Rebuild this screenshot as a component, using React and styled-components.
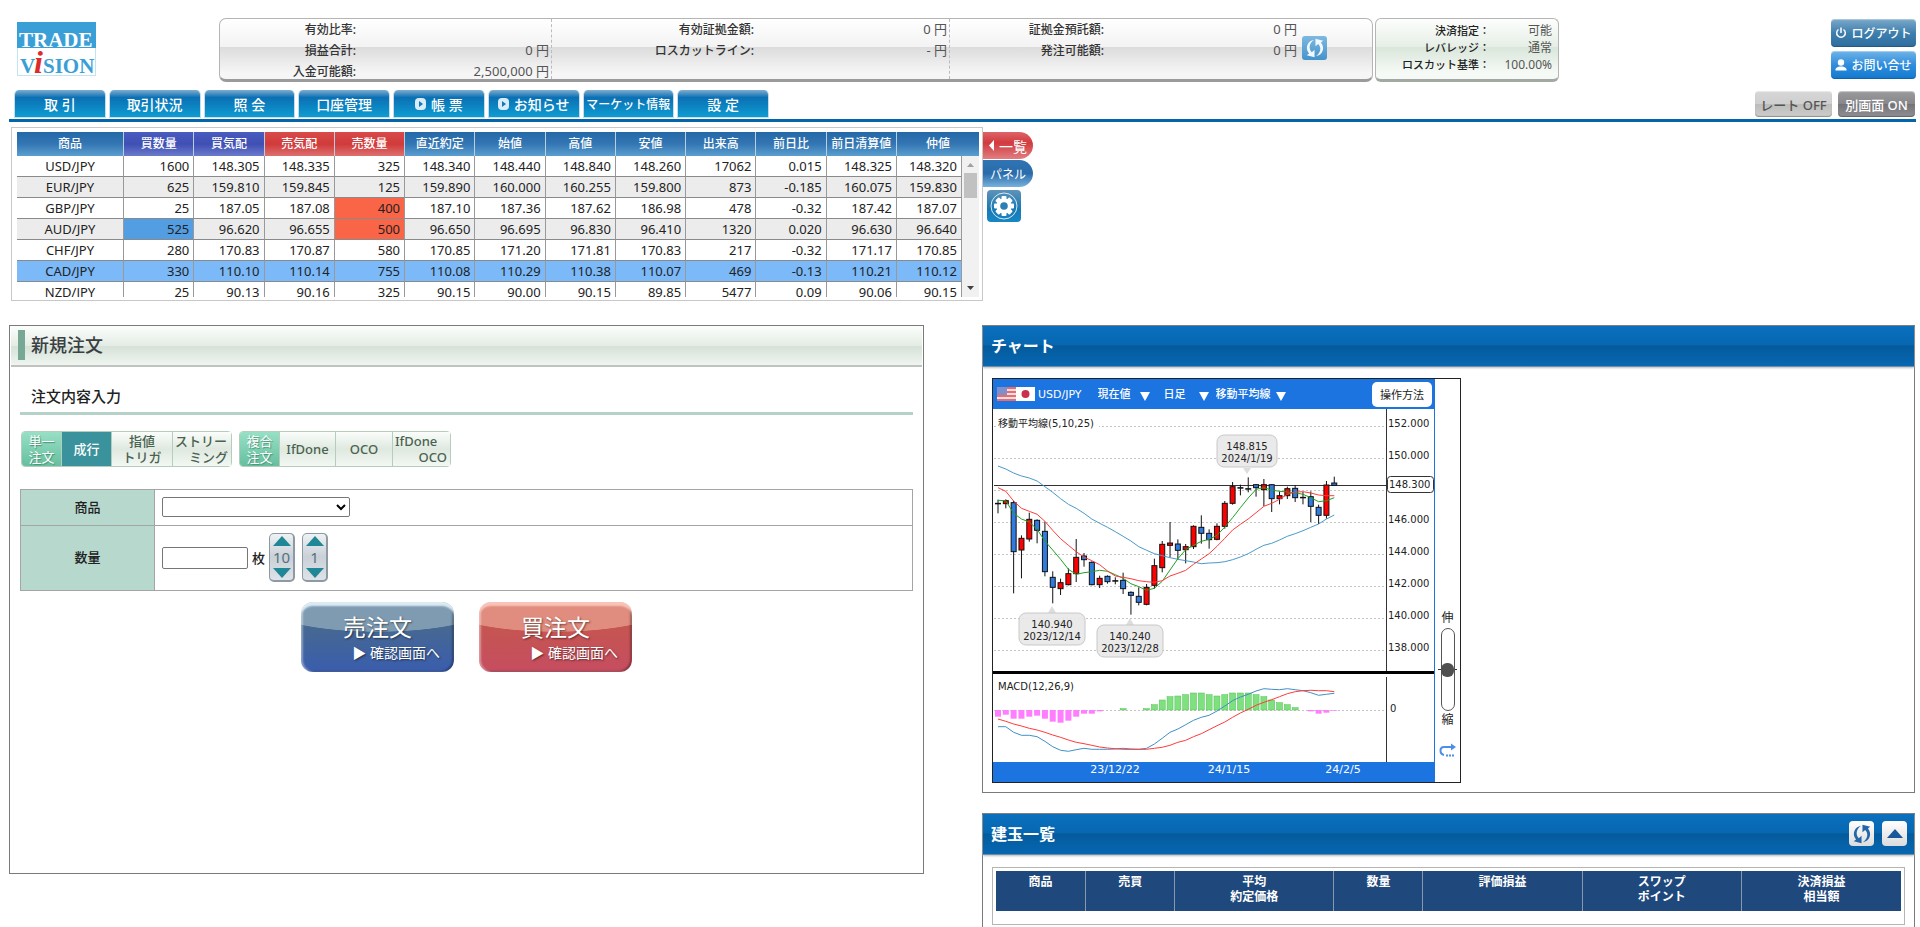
import React, { useState } from 'react';
import styled, { createGlobalStyle, css } from 'styled-components';

const NAV_ITEMS = [
  { label: '取 引' },
  { label: '取引状況' },
  { label: '照 会' },
  { label: '口座管理' },
  { label: '帳 票', external: true },
  { label: 'お知らせ', external: true },
  { label: 'マーケット情報', small: true },
  { label: '設 定' },
];

const RATE_COLUMNS = [
  { label: '商品', width: 107 },
  { label: '買数量', tone: 'buy' },
  { label: '買気配', tone: 'buy' },
  { label: '売気配', tone: 'sell' },
  { label: '売数量', tone: 'sell' },
  { label: '直近約定' },
  { label: '始値' },
  { label: '高値' },
  { label: '安値' },
  { label: '出来高' },
  { label: '前日比' },
  { label: '前日清算値' },
  { label: '仲値', width: 65 },
];

const RATES = [
  ['USD/JPY', '1600', '148.305', '148.335', '325', '148.340', '148.440', '148.840', '148.260', '17062', '0.015', '148.325', '148.320'],
  ['EUR/JPY', '625', '159.810', '159.845', '125', '159.890', '160.000', '160.255', '159.800', '873', '-0.185', '160.075', '159.830'],
  ['GBP/JPY', '25', '187.05', '187.08', '400', '187.10', '187.36', '187.62', '186.98', '478', '-0.32', '187.42', '187.07'],
  ['AUD/JPY', '525', '96.620', '96.655', '500', '96.650', '96.695', '96.830', '96.410', '1320', '0.020', '96.630', '96.640'],
  ['CHF/JPY', '280', '170.83', '170.87', '580', '170.85', '171.20', '171.81', '170.83', '217', '-0.32', '171.17', '170.85'],
  ['CAD/JPY', '330', '110.10', '110.14', '755', '110.08', '110.29', '110.38', '110.07', '469', '-0.13', '110.21', '110.12'],
  ['NZD/JPY', '25', '90.13', '90.16', '325', '90.15', '90.00', '90.15', '89.85', '5477', '0.09', '90.06', '90.15'],
];

const SELECTED_PAIR = 'CAD/JPY';
const RATE_MARKS = {
  'GBP/JPY-4': '#fa6548',
  'AUD/JPY-1': '#539de2',
  'AUD/JPY-4': '#fa6548',
};

const POSITION_COLUMNS = [
  { label: ['商品'], width: 90 },
  { label: ['売買'], width: 89 },
  { label: ['平均', '約定価格'], width: 159 },
  { label: ['数量'], width: 89 },
  { label: ['評価損益'], width: 159 },
  { label: ['スワップ', 'ポイント'], width: 159 },
  { label: ['決済損益', '相当額'], width: 159 },
];

// 149.25円を0とした下向きの目盛り (1円 = 48)
// [上端, 下端, 高値, 安値, 陽線]
const CANDLES = [
  [100, 100, 89, 130, 0], [92, 101, 88, 115, 1], [98, 245, 93, 370, 0], [205, 240, 196, 325, 1],
  [148, 207, 128, 215, 1], [151, 181, 148, 220, 0], [184, 305, 155, 319, 0], [322, 352, 304, 400, 0],
  [338, 356, 326, 375, 1], [311, 344, 295, 346, 1], [262, 311, 207, 336, 1], [258, 269, 249, 290, 0],
  [277, 344, 274, 346, 0], [325, 344, 317, 354, 1], [319, 335, 316, 341, 0], [332, 332, 322, 343, 0],
  [331, 356, 308, 372, 0], [367, 376, 364, 434, 0], [379, 397, 352, 406, 0], [352, 403, 342, 406, 1],
  [287, 346, 266, 356, 1], [223, 293, 213, 307, 1], [219, 226, 156, 262, 1], [222, 241, 208, 268, 0],
  [230, 239, 222, 280, 1], [169, 230, 166, 237, 1], [172, 190, 136, 221, 0], [190, 209, 178, 236, 0],
  [169, 208, 160, 211, 1], [100, 169, 93, 176, 1], [50, 100, 36, 104, 1], [53, 53, 44, 76, 0],
  [56, 56, 22, 67, 0], [44, 53, 42, 80, 0], [44, 59, 27, 108, 1], [44, 86, 42, 126, 0],
  [77, 86, 64, 103, 1], [56, 77, 50, 87, 1], [55, 83, 45, 96, 0], [82, 82, 66, 103, 0],
  [80, 109, 64, 156, 0], [112, 136, 104, 162, 0], [45, 136, 33, 146, 1], [39, 46, 20, 46, 0],
];
const MA5 = [91, 92, 130, 147, 156, 178, 213, 240, 268, 298, 313, 308, 305, 301, 304, 314, 325, 341, 350, 361, 355, 334, 300, 266, 239, 226, 214, 208, 196, 171, 143, 113, 84, 58, 53, 60, 64, 66, 68, 73, 83, 95, 92, 83];
const MA10 = [53, 64, 93, 115, 124, 133, 154, 181, 206, 226, 245, 261, 272, 284, 303, 318, 322, 326, 332, 335, 337, 332, 318, 310, 301, 283, 267, 251, 229, 205, 180, 163, 147, 128, 109, 100, 88, 73, 66, 65, 69, 75, 77, 77];
const MA25 = [-12, -3, 9, 18, 24, 33, 50, 67, 86, 103, 115, 130, 147, 160, 172, 185, 199, 213, 230, 241, 251, 257, 263, 268, 272, 276, 281, 279, 278, 275, 269, 261, 251, 238, 226, 220, 210, 199, 191, 182, 172, 162, 147, 135];
// MACD: 0ラインからの距離 (上がプラス)
const MACD_BARS = [-20, -14, -26, -26, -20, -17, -26, -35, -38, -32, -20, -11, -11, -4, 0, 0, 4, 0, 0, 4, 16, 30, 40, 42, 46, 51, 51, 46, 42, 46, 51, 51, 51, 46, 40, 30, 22, 16, 7, 0, -4, -11, -8, -2];
const MACD_LINE = [-50, -50, -67, -76, -76, -80, -94, -110, -121, -124, -119, -115, -118, -118, -118, -117, -115, -117, -118, -115, -102, -85, -67, -57, -44, -31, -22, -16, -3, 12, 28, 39, 47, 57, 64, 62, 61, 64, 61, 58, 52, 44, 47, 50];
const SIGNAL_LINE = [-27, -34, -42, -48, -55, -60, -67, -75, -82, -90, -97, -101, -106, -111, -114, -116, -118, -118, -118, -118, -115, -112, -106, -97, -91, -80, -71, -59, -47, -36, -22, -9, 2, 14, 23, 31, 40, 49, 55, 58, 59, 58, 58, 55];

const candleX = i => 5 + i * 7.82;
const priceY = v => 61 + v / 3;
const macdY = v => 301 - v / 3;
const toPoints = (values, toY) =>
  values.map((v, i) => `${candleX(i).toFixed(1)},${toY(v).toFixed(1)}`).join(' ');

const CALLOUTS = [
  { x: 224, y: 26, width: 60, price: '148.815', date: '2024/1/19', tip: '250,59 258,59 254,65' },
  { x: 26, y: 204, width: 66, price: '140.940', date: '2023/12/14', tip: '55,204 63,204 59,197' },
  { x: 104, y: 216, width: 66, price: '140.240', date: '2023/12/28', tip: '133,216 141,216 137,209' },
];

const REFRESH_ARROW = 'M11 3C4 4 0.5 12 5.5 18L3 20L11.5 22L11.5 14L8.5 16.5C4.5 12.5 6 6.5 11 3Z';

const RefreshIcon = ({ size, color }) => (
  <svg width={size} height={size} viewBox="0 0 24 24" fill={color} aria-hidden="true">
    <path d={REFRESH_ARROW} />
    <path d={REFRESH_ARROW} transform="rotate(180 12 12)" />
  </svg>
);

const GearIcon = () => (
  <svg width="30" height="30" viewBox="0 0 30 30" aria-hidden="true">
    <circle cx="15" cy="15" r="13" fill="none" stroke="#d5e9f5" strokeWidth="1" />
    {[0, 45, 90, 135].map(deg => (
      <rect key={deg} x="12.5" y="5" width="5" height="20" rx="1" fill="#fff" transform={`rotate(${deg} 15 15)`} />
    ))}
    <circle cx="15" cy="15" r="7.5" fill="#fff" />
    <circle cx="15" cy="15" r="3.8" fill="#2b7fb5" />
  </svg>
);

const PlayIcon = () => (
  <svg width="11" height="12" viewBox="0 0 11 12" aria-hidden="true">
    <rect width="11" height="12" rx="4" fill="#d9edf8" />
    <path d="M4 3L8 6L4 9Z" fill="#1278b8" />
  </svg>
);

const Triangle = ({ width, height, down, color }) => (
  <svg width={width} height={height} viewBox="0 0 10 10" preserveAspectRatio="none" aria-hidden="true">
    <path d={down ? 'M0 0H10L5 10Z' : 'M5 0L10 10H0Z'} fill={color} />
  </svg>
);

const Logo = () => (
  <svg width="79" height="54" viewBox="0 0 79 54" role="img" aria-label="TRADE VISION">
    <rect x="0.5" y="0.5" width="78" height="53" fill="#fff" stroke="#c3e2f3" />
    <rect width="79" height="26" fill="#3a9fd6" />
    <g fontFamily="'Liberation Serif', serif" fontWeight="bold" fontSize="21">
      <text x="2" y="25" fill="#fff">TRADE</text>
      <text x="3" y="51" fill="#3a9fd6">V</text>
      <text x="26" y="51" fill="#3a9fd6">SION</text>
      <text x="17" y="51" fill="#dd2a2a" fontStyle="italic" fontSize="32">i</text>
    </g>
  </svg>
);

const Flags = () => (
  <svg width="38" height="14" viewBox="0 0 38 14" aria-hidden="true">
    <rect width="19" height="14" fill="#f6dfe0" />
    {[0, 4, 8, 12].map(y => (
      <rect key={y} y={y} width="19" height="2" fill="#e96c70" />
    ))}
    <rect width="10" height="8" fill="#7f8fca" />
    <rect x="19" width="19" height="14" fill="#fff" />
    <circle cx="28.5" cy="7" r="4" fill="#c8304e" />
  </svg>
);

const PriceChart = () => (
  <ChartSvg viewBox="0 0 441 353" width="441" height="353">
    <g stroke="#c4c4c4" strokeDasharray="2 2">
      {[0, 1, 2, 3, 4, 5, 6, 7].map(i => (
        <line key={i} x1="1" x2="393" y1={17.5 + i * 32} y2={17.5 + i * 32} />
      ))}
      <line x1="1" x2="393" y1="301.5" y2="301.5" />
    </g>
    <rect x="4" y="8" width="102" height="14" fill="#fff" />
    <g fill="#222">
      <text x="5" y="18">移動平均線(5,10,25)</text>
      {[152, 150, 146, 144, 142, 140, 138].map(p => (
        <text key={p} x="395" y={(152 - p) * 16 + 18}>{`${p}.000`}</text>
      ))}
      <text x="5" y="281">MACD(12,26,9)</text>
      <text x="397" y="303">0</text>
    </g>
    <line x1="1" x2="393" y1="76.5" y2="76.5" stroke="#333" />
    <g stroke="#333">
      <line x1="393.5" x2="393.5" y1="0" y2="262" />
      <line x1="393.5" x2="393.5" y1="268" y2="353" />
    </g>
    {CANDLES.map(([top, bottom, high, low, up], i) => (
      <g key={i} stroke="#111">
        <line x1={candleX(i)} x2={candleX(i)} y1={priceY(high)} y2={priceY(low)} />
        <rect
          x={candleX(i) - 2.5}
          y={priceY(top)}
          width="5"
          height={Math.max((bottom - top) / 3, 0.5)}
          fill={up ? '#f00' : '#2f7be0'}
        />
      </g>
    ))}
    <g fill="none">
      <polyline points={toPoints(MA25, priceY)} stroke="#4a9ac8" />
      <polyline points={toPoints(MA5, priceY)} stroke="#22a022" />
      <polyline points={toPoints(MA10, priceY)} stroke="#ff3b3b" />
    </g>
    {CALLOUTS.map(c => (
      <g key={c.date}>
        <polygon points={c.tip} fill="#ddd" />
        <rect x={c.x} y={c.y} width={c.width} height="32" rx="7" fill="#e8e8e8" fillOpacity="0.9" stroke="#c8c8c8" />
        <g fill="#222" textAnchor="middle">
          <text x={c.x + c.width / 2} y={c.y + 15}>{c.price}</text>
          <text x={c.x + c.width / 2} y={c.y + 27}>{c.date}</text>
        </g>
      </g>
    ))}
    <rect x="394.5" y="67.5" width="46" height="16" rx="3" fill="#fff" stroke="#333" />
    <text x="396" y="79" fill="#222">148.300</text>
    <rect y="262" width="441" height="3" fill="#000" />
    {MACD_BARS.map((v, i) => (
      <rect
        key={i}
        x={candleX(i) - 3}
        y={v > 0 ? macdY(v) : 301}
        width="6"
        height={Math.abs(v) / 3}
        fill={v > 0 ? '#7fe07f' : '#ff7dff'}
        stroke={v > 0 ? '#52c052' : 'none'}
        strokeWidth={v ? 0.5 : 0}
      />
    ))}
    <g fill="none">
      <polyline points={toPoints(MACD_LINE, macdY)} stroke="#4090c4" />
      <polyline points={toPoints(SIGNAL_LINE, macdY)} stroke="#ff3b3b" />
    </g>
  </ChartSvg>
);

const RateTable = () => (
  <RateBox>
    <RateViewport>
      <Rates>
        <colgroup>
          {RATE_COLUMNS.map(c => (
            <col key={c.label} width={c.width} />
          ))}
          <col width="17" />
        </colgroup>
        <thead>
          <tr>
            {RATE_COLUMNS.map((c, i) => (
              <RateHead key={c.label} $tone={c.tone} colSpan={i === 12 ? 2 : 1}>
                {c.label}
              </RateHead>
            ))}
          </tr>
        </thead>
        <tbody>
          {RATES.map((row, r) => (
            <RateRow key={row[0]} $selected={row[0] === SELECTED_PAIR}>
              {row.map((value, i) => (
                <RateCell key={i} $mark={RATE_MARKS[`${row[0]}-${i}`]}>
                  {value}
                </RateCell>
              ))}
              {r === 0 && (
                <ScrollCell rowSpan={RATES.length}>
                  <ScrollBar>
                    <Triangle width={7} height={4} color="#a0a0a0" />
                    <ScrollThumb />
                    <Triangle width={7} height={4} color="#404040" down />
                  </ScrollBar>
                </ScrollCell>
              )}
            </RateRow>
          ))}
        </tbody>
      </Rates>
    </RateViewport>
  </RateBox>
);

const Stepper = ({ step, onStep }) => (
  <StepBox>
    <StepButton type="button" aria-label={`${step}枚増やす`} onClick={() => onStep(step)}>
      <Triangle width={18} height={10} color="#1f8795" />
    </StepButton>
    <span>{step}</span>
    <StepButton type="button" aria-label={`${step}枚減らす`} onClick={() => onStep(-step)}>
      <Triangle width={18} height={10} color="#1f8795" down />
    </StepButton>
  </StepBox>
);

const OrderForm = () => {
  const [quantity, setQuantity] = useState('');

  const handleStep = diff => {
    setQuantity(prev => String(Math.max(0, Number(prev) + diff)));
  };

  return (
    <OrderBody>
      <SubTitle>注文内容入力</SubTitle>
      <OrderTypes>
        <OrderGroup>
          <GroupLabel>
            単一
            <br />
            注文
          </GroupLabel>
          <OrderType $width={50} $active>成行</OrderType>
          <OrderType $width={61}>
            指値
            <br />
            トリガ
          </OrderType>
          <OrderType $width={59}>
            <Stagger>
              <span>ストリー</span>
              <span>ミング</span>
            </Stagger>
          </OrderType>
        </OrderGroup>
        <OrderGroup>
          <GroupLabel>
            複合
            <br />
            注文
          </GroupLabel>
          <OrderType $width={56}>IfDone</OrderType>
          <OrderType $width={57}>OCO</OrderType>
          <OrderType $width={58}>
            <Stagger>
              <span>IfDone</span>
              <span>OCO</span>
            </Stagger>
          </OrderType>
        </OrderGroup>
      </OrderTypes>
      <FormGrid>
        <FieldLabel htmlFor="product">商品</FieldLabel>
        <Field>
          <ProductSelect id="product" />
        </Field>
        <FieldLabel htmlFor="quantity">数量</FieldLabel>
        <Field $tall>
          <QuantityInput
            id="quantity"
            value={quantity}
            onChange={e => setQuantity(e.target.value)}
          />
          <Unit>枚</Unit>
          <Stepper step={10} onStep={handleStep} />
          <Stepper step={1} onStep={handleStep} />
        </Field>
      </FormGrid>
      <OrderActions>
        <OrderButton type="button" $side="sell">
          売注文
          <small>▶ 確認画面へ</small>
        </OrderButton>
        <OrderButton type="button" $side="buy">
          買注文
          <small>▶ 確認画面へ</small>
        </OrderButton>
      </OrderActions>
    </OrderBody>
  );
};

const ChartWidget = () => (
  <ChartBox>
    <ChartMain>
      <ChartBar>
        <Flags />
        <PairName>USD/JPY</PairName>
        <ChartPick $width={52} $gap={14}>
          <select aria-label="価格"><option>現在値</option></select>
        </ChartPick>
        <ChartPick $width={45} $gap={7}>
          <select aria-label="足種"><option>日足</option></select>
        </ChartPick>
        <ChartPick $width={70}>
          <select aria-label="指標"><option>移動平均線</option></select>
        </ChartPick>
        <HelpButton type="button">操作方法</HelpButton>
      </ChartBar>
      <PriceChart />
      <DateBar>
        <span>23/12/22</span>
        <span>24/1/15</span>
        <span>24/2/5</span>
      </DateBar>
    </ChartMain>
    <ZoomColumn>
      <label htmlFor="zoom">伸</label>
      <ZoomTrack>
        <ZoomRange id="zoom" type="range" defaultValue="50" />
      </ZoomTrack>
      <span>縮</span>
      <ResetButton type="button" aria-label="元に戻す">
        <svg width="18" height="14" viewBox="0 0 18 14" fill="none" stroke="#4a8fe8" strokeWidth="2">
          <path d="M13 4H5C2.5 4 1.5 5.5 1.5 7.5S2.5 11.5 5 12" />
          <path d="M7 12.5H16" strokeDasharray="2 1" />
          <path d="M12 0.5L17 4L12 7.5Z" fill="#4a8fe8" stroke="none" />
        </svg>
      </ResetButton>
    </ZoomColumn>
  </ChartBox>
);

const App = () => (
  <>
    <GlobalStyle />
    <Page>
      <Header>
        <Logo />
        <Summary>
          <SummaryCell $basis={331}>
            <dt>有効比率:</dt>
            <dd />
            <dt>損益合計:</dt>
            <dd>0 円</dd>
            <dt>入金可能額:</dt>
            <dd>2,500,000 円</dd>
          </SummaryCell>
          <SummaryCell $basis={398}>
            <dt>有効証拠金額:</dt>
            <dd>0 円</dd>
            <dt>ロスカットライン:</dt>
            <dd>- 円</dd>
          </SummaryCell>
          <SummaryCell $basis={350}>
            <dt>証拠金預託額:</dt>
            <dd>0 円</dd>
            <dt>発注可能額:</dt>
            <dd>0 円</dd>
          </SummaryCell>
          <SummaryTool>
            <RefreshButton type="button" aria-label="更新">
              <RefreshIcon size={22} color="#f2f8fd" />
            </RefreshButton>
          </SummaryTool>
        </Summary>
        <Status>
          <dt>決済指定：</dt>
          <dd>可能</dd>
          <dt>レバレッジ：</dt>
          <dd>通常</dd>
          <dt>ロスカット基準：</dt>
          <dd>100.00%</dd>
        </Status>
        <HeaderActions>
          <HeaderButton type="button">
            <svg width="12" height="12" viewBox="0 0 12 12" fill="none" stroke="#fff" strokeWidth="1.5" aria-hidden="true">
              <path d="M6 0.5V6M3.5 2.5A4.3 4.3 0 1 0 8.5 2.5" />
            </svg>
            ログアウト
          </HeaderButton>
          <HeaderButton type="button" $bright>
            <svg width="12" height="12" viewBox="0 0 12 12" fill="#fff" aria-hidden="true">
              <circle cx="6" cy="3.5" r="3.2" />
              <path d="M0.5 11.5V10C1.5 8 4 7.5 6 7.5S10.5 8 11.5 10V11.5Z" />
            </svg>
            お問い合せ
          </HeaderButton>
        </HeaderActions>
      </Header>

      <Nav>
        <Tabs>
          {NAV_ITEMS.map(item => (
            <Tab key={item.label} href="#" $small={item.small}>
              {item.external && <PlayIcon />}
              {item.label}
            </Tab>
          ))}
        </Tabs>
        <Toggles>
          <Toggle type="button">レート OFF</Toggle>
          <Toggle type="button" $on>別画面 ON</Toggle>
        </Toggles>
      </Nav>

      <RateArea>
        <RateTable />
        <SideTabs>
          <SideTab type="button" $active>
            <svg width="5" height="11" viewBox="0 0 5 11" aria-hidden="true">
              <path d="M5 0V11L0 5.5Z" fill="#fff" />
            </svg>
            一覧
          </SideTab>
          <SideTab type="button">パネル</SideTab>
          <GearButton type="button" aria-label="表示設定">
            <GearIcon />
          </GearButton>
        </SideTabs>
      </RateArea>

      <Columns>
        <Panel $minHeight={549}>
          <OrderTitleBar>
            <h2>新規注文</h2>
          </OrderTitleBar>
          <OrderForm />
        </Panel>
        <RightStack>
          <Panel>
            <TitleBar>
              <h2>チャート</h2>
            </TitleBar>
            <ChartBody>
              <ChartWidget />
            </ChartBody>
          </Panel>
          <Panel $flush>
            <TitleBar>
              <h2>建玉一覧</h2>
              <BarButton type="button" aria-label="更新">
                <RefreshIcon size={22} color="#2467a8" />
              </BarButton>
              <BarButton type="button" aria-label="閉じる">
                <Triangle width={16} height={9} color="#17599c" />
              </BarButton>
            </TitleBar>
            <PositionBody>
              <PositionBox>
                <Positions>
                  <thead>
                    <tr>
                      {POSITION_COLUMNS.map(c => (
                        <th key={c.label[0]} width={c.width}>
                          {c.label.map(line => (
                            <div key={line}>{line}</div>
                          ))}
                        </th>
                      ))}
                    </tr>
                  </thead>
                </Positions>
              </PositionBox>
            </PositionBody>
          </Panel>
        </RightStack>
      </Columns>
    </Page>
  </>
);

export default App;

const GlobalStyle = createGlobalStyle`
  * {
    box-sizing: border-box;
  }

  body {
    margin: 0;
    background: #fff;
    color: #222;
    font-family: 'Noto Sans', 'Noto Sans CJK JP', sans-serif;
    font-size: 13px;
  }

  button, select, input {
    font-family: inherit;
    margin: 0;
  }

  button {
    padding: 0;
    border: 0;
    cursor: pointer;
  }

  h2, h3, dl, dd {
    margin: 0;
  }
`;

const Page = styled.div`
  padding: 0 4px 0 9px;
`;

const Header = styled.header`
  display: flex;
  align-items: flex-start;
  padding: 18px 0 8px 8px;

  > svg {
    flex: none;
    margin: 4px 123px 0 0;
  }
`;

const Summary = styled.div`
  display: flex;
  flex: 0 1 1154px;
  height: 64px;
  border: 1px solid #b5b5b5;
  border-bottom: 3px solid #9b9b9b;
  border-radius: 7px;
  background: linear-gradient(#fff, #f3f3f3 46%, #dcdcdc 47%, #f6f6f6 90%);
`;

const SummaryCell = styled.dl`
  display: grid;
  flex: 1 1 ${({ $basis }) => $basis}px;
  grid-template-columns: 1fr 195px;
  grid-auto-rows: 21px;
  text-align: right;
  line-height: 21px;

  & + & {
    border-left: 1px dashed #bbb;
  }

  dt {
    color: #333;
    font-size: 12px;
    font-weight: 500;
  }

  dd {
    padding-right: 2px;
    color: #555;
  }
`;

const SummaryTool = styled.div`
  flex: 0 0 73px;
  padding: 17px 0 0 3px;
`;

const RefreshButton = styled.button`
  display: grid;
  place-items: center;
  width: 25px;
  height: 24px;
  border-radius: 3px;
  background: linear-gradient(#7db9e0, #4493cb);
`;

const Status = styled.dl`
  display: grid;
  flex: 0 0 184px;
  grid-template-columns: 1fr 62px;
  grid-auto-rows: 17px;
  height: 64px;
  margin-left: 2px;
  padding: 3px 6px 0 0;
  border: 1px solid #b5b5b5;
  border-bottom: 3px solid #a3a8a3;
  border-radius: 6px;
  background: linear-gradient(#fdfefd, #e6eee6 46%, #d9e6da 47%, #f6faf6 90%);
  line-height: 17px;
  text-align: right;

  dt {
    font-size: 11px;
    font-weight: 500;
  }

  dd {
    color: #555;
    font-size: 12px;
  }
`;

const HeaderActions = styled.div`
  display: grid;
  gap: 4px;
  margin: 1px 0 0 auto;
`;

const HeaderButton = styled.button`
  display: flex;
  align-items: center;
  justify-content: center;
  gap: 4px;
  width: 85px;
  height: 28px;
  border-radius: 4px;
  background: ${({ $bright }) =>
    $bright ? 'linear-gradient(#6fb3e8, #2f8ddc 50%, #1379cf)' : 'linear-gradient(#7ba9c9, #3f7fae 50%, #2d6d9f)'};
  box-shadow: inset 0 -1px 1px rgba(0, 0, 0, 0.2), inset 0 1px 1px rgba(255, 255, 255, 0.4);
  color: #fff;
  font-size: 12px;
  font-weight: 500;
  white-space: nowrap;
`;

const Nav = styled.nav`
  display: flex;
  justify-content: space-between;
  height: 32px;
  padding-left: 5px;
  border-bottom: 3px solid #0466a8;
`;

const Tabs = styled.div`
  display: flex;
  flex: 0 1 755px;
  gap: 3px;
`;

const Tab = styled.a`
  display: flex;
  flex: 1 1 0;
  align-items: center;
  justify-content: center;
  gap: 5px;
  height: 28px;
  border: 1px solid #c6dcea;
  border-width: 0 1px 1px;
  border-radius: 5px 5px 0 0;
  background: linear-gradient(#7fadd0, #0a70b4 28%, #0f9cd2);
  color: #fff;
  font-size: ${({ $small }) => ($small ? 12 : 14)}px;
  font-weight: 500;
  text-decoration: none;
  white-space: nowrap;
`;

const Toggles = styled.div`
  display: flex;
  gap: 6px;
  padding: 1px 1px 0 0;
`;

const Toggle = styled.button`
  width: 77px;
  height: 26px;
  border-radius: 4px;
  background: ${({ $on }) =>
    $on ? 'linear-gradient(#9b9b9e, #87878b 50%, #737377 51%, #909094)' : 'linear-gradient(#d6d6d6, #cfcfcf 50%, #bcbcba 51%, #cdcdcb)'};
  box-shadow: inset 0 -1px 1px rgba(0, 0, 0, 0.3), inset 0 1px 1px rgba(255, 255, 255, 0.5);
  color: ${({ $on }) => ($on ? '#fff' : '#555')};
  font-size: 13px;
  font-weight: 500;
  white-space: nowrap;
`;

const RateArea = styled.div`
  display: flex;
  padding: 5px 0 0 2px;
`;

const RateBox = styled.div`
  flex: 0 1 972px;
  height: 174px;
  padding: 4px 3px 3px 5px;
  border: 1px solid #c8c8c8;
`;

const RateViewport = styled.div`
  height: 165px;
  overflow: hidden;
`;

const Rates = styled.table`
  width: 100%;
  border-spacing: 0;
  table-layout: fixed;
`;

const headTones = {
  buy: 'linear-gradient(#4a5cc0, #3f4fb4 50%, #6b7bcb)',
  sell: 'linear-gradient(#d94a4a, #d03a3a 50%, #de7070)',
};

const RateHead = styled.th`
  height: 24px;
  padding: 0;
  border-right: 1px solid #b9cfe0;
  background: ${({ $tone }) => headTones[$tone] || 'linear-gradient(#2468a8, #3476b3 50%, #5b9fd0)'};
  color: #fff;
  font-size: 12px;
  font-weight: 500;
  line-height: 24px;
  white-space: nowrap;

  &:last-child {
    border-right: 0;
  }
`;

const RateCell = styled.td`
  height: 21px;
  padding: 0 4px 0 0;
  border-right: 1px solid #999;
  border-bottom: 1px solid #8a8a8a;
  ${({ $mark }) => $mark && css`background: ${$mark};`}
  line-height: 20px;
  text-align: right;

  &:first-child {
    padding: 0;
    text-align: center;
  }
`;

const RateRow = styled.tr`
  &:nth-child(even) {
    background: #ececec;
  }

  ${({ $selected }) => $selected && css`
    && {
      background: #7bb9f8;
    }
  `}
`;

const ScrollCell = styled.td`
  padding: 0;
  background: #f1f1f1;
  vertical-align: top;
`;

const ScrollBar = styled.div`
  display: flex;
  flex-direction: column;
  align-items: center;
  height: 141px;
  padding: 7px 0;

  svg:last-child {
    margin-top: auto;
  }
`;

const ScrollThumb = styled.div`
  width: 13px;
  height: 25px;
  margin-top: 6px;
  background: #c1c1c1;
`;

const SideTabs = styled.div`
  display: flex;
  flex-direction: column;
  align-items: flex-start;
  gap: 1px;
  padding-top: 5px;
`;

const SideTab = styled.button`
  display: flex;
  align-items: center;
  justify-content: center;
  gap: 5px;
  width: 50px;
  height: 27px;
  border-radius: 0 14px 14px 0;
  background: ${({ $active }) =>
    $active ? 'linear-gradient(#dc6468, #d23a3e 40%, #e07f82)' : 'linear-gradient(#2f74b3, #2a6cab 50%, #78b2dc)'};
  color: #fff;
  font-size: ${({ $active }) => ($active ? 14 : 12)}px;
`;

const GearButton = styled.button`
  display: grid;
  place-items: center;
  width: 34px;
  height: 32px;
  margin: 2px 0 0 4px;
  border-radius: 4px;
  background: linear-gradient(#5f93b8, #1879b4 60%, #1787c4);
`;

const Columns = styled.main`
  display: grid;
  grid-template-columns: minmax(0, 915fr) minmax(0, 933fr);
  gap: 58px;
  align-items: start;
  margin-top: 24px;
  padding-right: 1px;
`;

const RightStack = styled.div`
  display: grid;
  gap: 20px;
`;

const Panel = styled.section`
  min-width: 0;
  min-height: ${({ $minHeight }) => $minHeight || 0}px;
  border: 1px solid #7a7a7a;
  ${({ $flush }) => $flush && css`border-bottom: 0;`}
`;

const OrderTitleBar = styled.header`
  display: flex;
  align-items: center;
  height: 41px;
  margin: 0 1px;
  padding: 0 0 1px 7px;
  border-bottom: 2px solid #bfc2bf;
  background: linear-gradient(#fcfefc, #e4ece5 50%, #d6e1d8 52%, #eff5f0);

  h2 {
    padding-left: 6px;
    border-left: 7px solid #77a795;
    color: #3a3f44;
    font-size: 18px;
    font-weight: 500;
    line-height: 30px;
  }
`;

const TitleBar = styled.header`
  display: flex;
  align-items: center;
  gap: 8px;
  height: 41px;
  padding: 0 7px 1px 8px;
  border-bottom: 1px solid #6a8fae;
  background: linear-gradient(#0a70be, #0767b1 46%, #045b9c 50%, #0767b2);
  box-shadow: 0 1px 2px #bbb;

  h2 {
    flex: 1;
    color: #fff;
    font-size: 16px;
    font-weight: bold;
    line-height: 20px;
  }
`;

const BarButton = styled.button`
  display: grid;
  place-items: center;
  width: 25px;
  height: 25px;
  border-radius: 4px;
  background: linear-gradient(#fff, #dcdcdc);
`;

const OrderBody = styled.div`
  padding: 13px 10px 0;
`;

const SubTitle = styled.h3`
  margin: 0;
  padding-left: 11px;
  border-bottom: 3px solid #b4d2c8;
  font-size: 15px;
  font-weight: 500;
  line-height: 32px;
`;

const OrderTypes = styled.div`
  display: flex;
  gap: 7px;
  padding: 16px 1px 22px;
`;

const OrderGroup = styled.div`
  display: flex;
  height: 36px;
  border: 1px solid #b5cdbd;
  border-radius: 4px;
`;

const GroupLabel = styled.span`
  display: grid;
  align-content: center;
  width: 39px;
  border-radius: 3px 0 0 3px;
  background: linear-gradient(#97e0c6, #66bf9e);
  color: #fff;
  font-size: 13px;
  line-height: 16px;
  text-align: center;
  text-shadow: 1px 1px 1px #4a8f76;
`;

const OrderType = styled.button.attrs({ type: 'button' })`
  width: ${({ $width }) => $width}px;
  border-left: 1px solid #b5cdbd;
  background: ${({ $active }) => ($active ? '#3a929c' : 'linear-gradient(#fafdfa, #dfe9e0 50%, #f2f7f2)')};
  color: ${({ $active }) => ($active ? '#fff' : '#4a6350')};
  font-size: 13px;
  font-weight: 500;
  line-height: 16px;
  white-space: nowrap;
`;

const Stagger = styled.span`
  display: flex;
  flex-direction: column;
  padding: 0 3px 0 2px;

  span:first-child {
    align-self: flex-start;
  }

  span:last-child {
    align-self: flex-end;
  }
`;

const FormGrid = styled.div`
  display: grid;
  grid-template-columns: 134px 1fr;
  border: 1px solid #a5a5a5;
`;

const FieldLabel = styled.label`
  display: grid;
  place-items: center;
  padding-bottom: 2px;
  border-right: 1px solid #a5a5a5;
  background: #b7d8cd;
  font-size: 13px;
  font-weight: 500;
  line-height: 16px;

  &:nth-of-type(n + 2) {
    border-top: 1px solid #a5a5a5;
  }
`;

const Field = styled.div`
  display: flex;
  align-items: center;
  height: ${({ $tall }) => ($tall ? 65 : 35)}px;
  padding: 0 0 1px 7px;
  ${({ $tall }) => $tall && css`border-top: 1px solid #a5a5a5;`}
`;

const ProductSelect = styled.select`
  width: 188px;
  height: 20px;
  border: 1px solid #767676;
  border-radius: 2px;
  background: #fff;
`;

const QuantityInput = styled.input`
  width: 86px;
  height: 22px;
  border: 1px solid #767676;
  border-radius: 2px;
`;

const Unit = styled.span`
  margin: 0 -3px 0 4px;
  font-weight: 500;
  line-height: 16px;
`;

const StepBox = styled.div`
  display: flex;
  flex-direction: column;
  align-items: center;
  justify-content: space-between;
  width: 26px;
  height: 49px;
  margin-left: 7px;
  padding: 2px 0;
  border: 1px solid #8e9aa3;
  border-right-width: 2px;
  border-bottom-width: 2px;
  border-radius: 5px;
  background: linear-gradient(#eef2f4, #c9d0d7 50%, #dde3e8);
  color: #56707a;
  font-size: 15px;
  line-height: 16px;
`;

const StepButton = styled.button`
  display: flex;
  background: none;
`;

const OrderActions = styled.div`
  display: flex;
  justify-content: center;
  gap: 25px;
  padding-top: 11px;
`;

const sideColors = {
  sell: { top: '#7e9bb2', mid: '#47698f', bottom: '#3a5dae', edge: '#dcebf3' },
  buy: { top: '#e08c7e', mid: '#c55650', bottom: '#c64d60', edge: '#f9c4b8' },
};

const OrderButton = styled.button`
  display: flex;
  flex-direction: column;
  align-items: center;
  justify-content: center;
  width: 153px;
  height: 70px;
  border-radius: 12px;
  ${({ $side }) => css`
    background: radial-gradient(120px 30px at 50% 0, ${sideColors[$side].top} 98%, transparent),
      linear-gradient(${sideColors[$side].mid} 30%, ${sideColors[$side].bottom});
    box-shadow: inset 0 5px 2px -1px ${sideColors[$side].edge}, inset 2px 0 2px rgba(255, 255, 255, 0.4),
      inset -2px -1px 2px rgba(0, 0, 0, 0.3);
  `}
  color: #fff;
  font-size: 23px;
  line-height: 32px;
  text-shadow: 1px 1px 2px rgba(0, 0, 0, 0.5);

  small {
    align-self: flex-end;
    padding-right: 14px;
    font-size: 14px;
    line-height: 20px;
  }
`;

const ChartBody = styled.div`
  padding: 11px 9px 9px;
`;

const ChartBox = styled.div`
  display: flex;
  width: fit-content;
  border: 1px solid #222;
  font-family: 'DejaVu Sans', 'Noto Sans CJK JP', sans-serif;
`;

const ChartMain = styled.div`
  border-right: 1px solid #1c74e0;
`;

const ChartBar = styled.div`
  display: flex;
  align-items: center;
  height: 30px;
  padding: 0 2px 0 4px;
  background: #1c74e0;
  color: #fff;
  font-size: 11px;
`;

const PairName = styled.span`
  margin: 0 16px 0 3px;
`;

const ChartPick = styled.div`
  position: relative;
  width: ${({ $width }) => $width}px;
  margin-right: ${({ $gap }) => $gap || 0}px;

  select {
    width: 100%;
    padding: 0;
    border: 0;
    appearance: none;
    background: none;
    color: #fff;
    font-size: 11px;
    font-weight: 500;
  }

  option {
    color: #222;
  }

  &::after {
    content: '';
    position: absolute;
    top: 4px;
    right: 0;
    border: 5px solid transparent;
    border-top: 9px solid #fff;
    border-bottom: 0;
    pointer-events: none;
  }
`;

const HelpButton = styled.button`
  width: 60px;
  height: 25px;
  margin-left: auto;
  border-radius: 5px;
  background: #fff;
  color: #222;
  font-size: 11px;
`;

const ChartSvg = styled.svg`
  display: block;
  font-family: 'DejaVu Sans', 'Noto Sans CJK JP', sans-serif;
  font-size: 10px;
`;

const DateBar = styled.div`
  display: grid;
  grid-template-columns: repeat(3, 114px);
  height: 20px;
  padding-left: 65px;
  background: #1c74e0;
  color: #fff;
  font-size: 11px;
  line-height: 16px;

  span {
    text-align: center;
  }
`;

const ZoomColumn = styled.div`
  display: flex;
  flex-direction: column;
  align-items: center;
  width: 25px;
  padding-top: 231px;
  font-size: 12px;
  line-height: 16px;
`;

const ZoomTrack = styled.div`
  display: flex;
  justify-content: center;
  width: 19px;
  height: 83px;
  margin: 2px 0 1px;
  background: linear-gradient(#333, #333) center / 100% 1px no-repeat;
`;

const ZoomRange = styled.input`
  width: 14px;
  height: 83px;
  border: 1px solid #555;
  border-radius: 7px;
  appearance: none;
  background: #fff;
  writing-mode: vertical-lr;

  &::-webkit-slider-thumb {
    width: 13px;
    height: 14px;
    border-radius: 6px;
    appearance: none;
    background: #505050;
  }
`;

const ResetButton = styled.button`
  display: flex;
  margin-top: 15px;
  background: none;
`;

const PositionBody = styled.div`
  padding: 12px 9px 2px;
`;

const PositionBox = styled.div`
  min-height: 58px;
  padding: 3px;
  border: 1px solid #b5b5b5;
`;

const Positions = styled.table`
  width: 100%;
  border-spacing: 0;
  table-layout: fixed;

  th {
    height: 40px;
    padding: 3px 0 0;
    border-right: 1px solid #8a97ab;
    background: #1f487c;
    color: #fff;
    font-size: 12px;
    line-height: 15px;
    vertical-align: top;
  }

  th:last-child {
    border-right: 0;
  }
`;
